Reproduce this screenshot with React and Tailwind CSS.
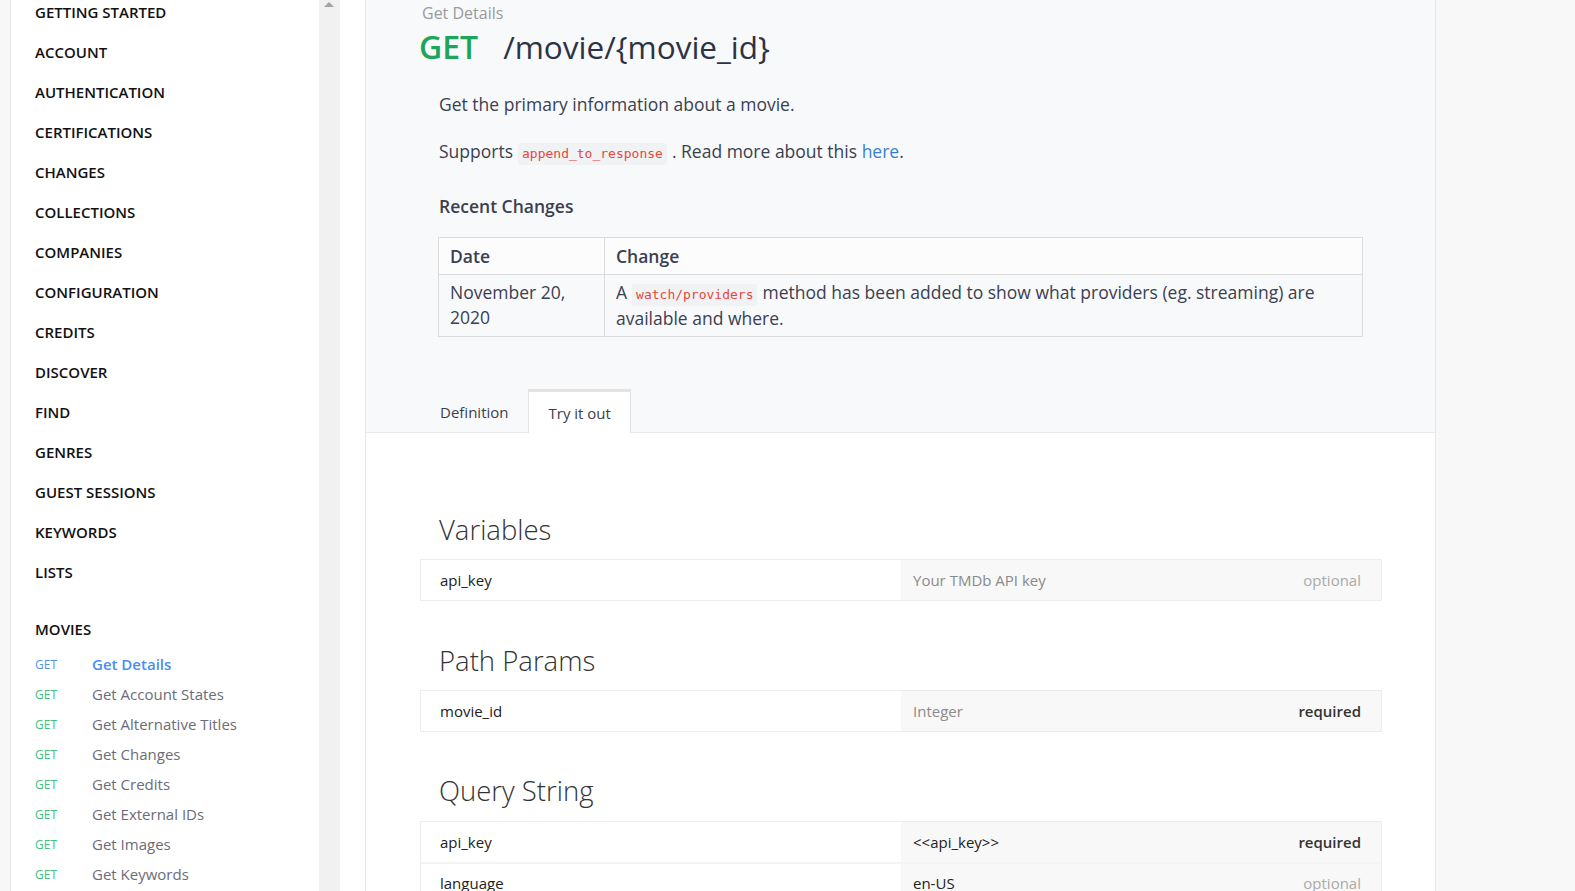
import React from 'react';

const sections = [
  'GETTING STARTED', 'ACCOUNT', 'AUTHENTICATION', 'CERTIFICATIONS', 'CHANGES',
  'COLLECTIONS', 'COMPANIES', 'CONFIGURATION', 'CREDITS', 'DISCOVER', 'FIND',
  'GENRES', 'GUEST SESSIONS', 'KEYWORDS', 'LISTS',
];

const movieItems = [
  'Get Details', 'Get Account States', 'Get Alternative Titles', 'Get Changes',
  'Get Credits', 'Get External IDs', 'Get Images', 'Get Keywords',
];

function Code({ children }) {
  return (
    <code className="mx-[5px] inline-block rounded-[3px] bg-[#f1f2f4] px-1 font-['DejaVu_Sans_Mono',monospace] text-[13px] leading-[22px] text-[#e8453c]">
      {children}
    </code>
  );
}

function ParamRow({ name, value, flag, valueMuted = true, bold = false, top = false }) {
  return (
    <div className={`flex h-10 items-stretch ${top ? '' : 'border-t-2 border-t-[#f4f4f4]'}`}>
      <div className="flex w-[480px] items-center bg-white pl-[19px] text-[15px] text-[#222]">{name}</div>
      <div className="flex flex-1 items-center justify-between bg-[#f8f8f8] pl-3 pr-5 text-[15px]">
        <span className={valueMuted ? 'text-[#8a8a8a]' : 'text-[#222]'}>{value}</span>
        <span className={bold ? 'font-semibold text-[#333]' : 'text-[#aaa]'}>{flag}</span>
      </div>
    </div>
  );
}

function ParamTable({ children }) {
  return <div className="ml-[54px] mr-[53px] border border-[#ececec]">{children}</div>;
}

function Sidebar() {
  return (
    <div className="flex shrink-0">
      <div className="w-[10px] bg-[#f7f7f7]" />
      <div className="w-[309px] border-l border-[#e6e6e6] bg-white pl-[24px]">
        <ul className="-mt-2">
          {sections.map((s) => (
            <li key={s} className="flex h-10 items-center text-[15px] font-semibold text-[#111]">{s}</li>
          ))}
          <li className="mt-[17px] flex h-10 items-center text-[15px] font-semibold text-[#111]">MOVIES</li>
          {movieItems.map((m, i) => (
            <li key={m} className="flex h-[30px] items-center">
              <span className={`w-[57px] pt-[2px] text-[12px] ${i === 0 ? 'text-[#5393f0]' : 'text-[#41c07f]'}`}>GET</span>
              <span className={`text-[15px] ${i === 0 ? 'font-semibold text-[#4a8ef0]' : 'text-[#6c6c78]'}`}>{m}</span>
            </li>
          ))}
        </ul>
      </div>
      <div className="relative w-[21px] bg-[#f1f1f1]">
        <div className="absolute left-[5px] top-[2px] h-0 w-0 border-x-[5px] border-b-[5px] border-x-transparent border-b-[#a3a3a3]" />
      </div>
      <div className="w-[25px] bg-white" />
    </div>
  );
}

export default function App() {
  return (
    <div className="flex h-[891px] w-full overflow-hidden bg-[#f8f8f8] font-['Open_Sans',sans-serif]">
      <Sidebar />
      <main className="w-[1071px] shrink-0 border-x border-x-[#e6e6e6] bg-white">
        {/* Header section */}
        <div className="border-b border-[#ebebeb] bg-[#f8f9fb]">
          <div className="pl-[56px] pt-[2px] text-[16px] leading-[22px] text-[#9a9a9a]">Get Details</div>
          <h1 className="flex items-center pl-[53px] leading-[46px]">
            <span className="text-[32px] font-semibold text-[#1ea55a]">GET</span>
            <span className="ml-[25px] text-[31.5px] text-[#2c3345]">/movie/&#123;movie_id&#125;</span>
          </h1>
          <div className="pl-[72px] pr-[72px] text-[17.5px] text-[#3b4050]">
            <p className="mt-[20px] pl-px leading-[28px]">Get the primary information about a movie.</p>
            <p className="mt-[19px] pl-px leading-[28px]">
              Supports<Code>append_to_response</Code>. Read more about this{' '}
              <span className="text-[#3a7fcf]">here</span>.
            </p>
            <h3 className="mt-[27px] pl-px font-semibold leading-[28px]">Recent Changes</h3>
            <table className="mt-[17px] w-full border-collapse border border-[#dcdcdc] text-left">
              <thead>
                <tr className="bg-[#fcfcfd]">
                  <th className="h-[37px] w-[166px] border border-[#dcdcdc] px-[11px] font-semibold">Date</th>
                  <th className="h-[37px] border border-[#dcdcdc] px-[11px] font-semibold">Change</th>
                </tr>
              </thead>
              <tbody>
                <tr>
                  <td className="border border-[#dcdcdc] px-[11px] py-[5px] align-top leading-[25px]">November 20, 2020</td>
                  <td className="border border-[#dcdcdc] px-[11px] py-[5px] align-top leading-[25px]">
                    A<Code>watch/providers</Code>method has been added to show what providers (eg. streaming) are available and where.
                  </td>
                </tr>
              </tbody>
            </table>
          </div>
          {/* Tabs */}
          <div className="mt-[52px] flex pl-[56px] text-[15px] text-[#3b4050]">
            <div className="flex h-[43px] items-center pl-[18px] pr-[20px] pt-[4px]">Definition</div>
            <div className="-mb-px flex h-[44px] items-center border-x border-t-[3px] border-x-[#e3e3e3] border-t-[#e3e3e3] bg-white px-[19px] pt-[2px]">Try it out</div>
          </div>
        </div>

        {/* Try it out */}
        <div className="pt-[79px]">
          <h2 className="ml-[73px] text-[27.5px] font-light leading-[36px] text-[#333]">Variables</h2>
          <div className="mt-[11px]">
            <ParamTable>
              <ParamRow name="api_key" value="Your TMDb API key" flag="optional" top />
            </ParamTable>
          </div>
          <h2 className="ml-[73px] mt-[42px] text-[27.5px] font-light leading-[36px] text-[#333]">Path Params</h2>
          <div className="mt-[11px]">
            <ParamTable>
              <ParamRow name="movie_id" value="Integer" flag="required" bold top />
            </ParamTable>
          </div>
          <h2 className="ml-[73px] mt-[41px] text-[27.5px] font-light leading-[36px] text-[#333]">Query String</h2>
          <div className="mt-[12px]">
            <ParamTable>
              <ParamRow name="api_key" value="<<api_key>>" flag="required" valueMuted={false} bold top />
              <ParamRow name="language" value="en-US" flag="optional" valueMuted={false} />
            </ParamTable>
          </div>
        </div>
      </main>
      <div className="flex-1 bg-[#f8f8f8]" />
    </div>
  );
}
